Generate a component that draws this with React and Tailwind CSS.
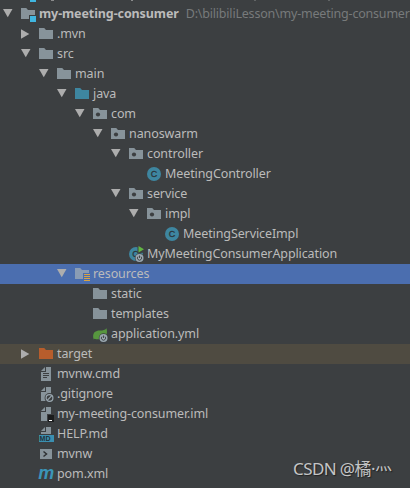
const ROWS = [
  { level: 0, arrow: 'down', icon: 'module', label: 'my-meeting-consumer', path: 'D:\\bilibiliLesson\\my-meeting-consumer' },
  { level: 1, arrow: 'right', icon: 'folder', label: '.mvn' },
  { level: 1, arrow: 'down', icon: 'folder', label: 'src' },
  { level: 2, arrow: 'down', icon: 'folder', label: 'main' },
  { level: 3, arrow: 'down', icon: 'source', label: 'java' },
  { level: 4, arrow: 'down', icon: 'package', label: 'com' },
  { level: 5, arrow: 'down', icon: 'package', label: 'nanoswarm' },
  { level: 6, arrow: 'down', icon: 'package', label: 'controller' },
  { level: 7, icon: 'class', label: 'MeetingController' },
  { level: 6, arrow: 'down', icon: 'package', label: 'service' },
  { level: 7, arrow: 'down', icon: 'package', label: 'impl' },
  { level: 8, icon: 'class', label: 'MeetingServiceImpl' },
  { level: 6, icon: 'application', label: 'MyMeetingConsumerApplication' },
  { level: 3, arrow: 'down', icon: 'resources', label: 'resources', rowClass: 'bg-[#4b6eaf]' },
  { level: 4, icon: 'folder', label: 'static' },
  { level: 4, icon: 'folder', label: 'templates' },
  { level: 4, icon: 'spring', label: 'application.yml' },
  { level: 1, arrow: 'right', icon: 'excluded', label: 'target', rowClass: 'bg-[#4f4b41]' },
  { level: 1, icon: 'text', label: 'mvnw.cmd' },
  { level: 1, icon: 'ignored', label: '.gitignore' },
  { level: 1, icon: 'iml', label: 'my-meeting-consumer.iml' },
  { level: 1, icon: 'markdown', label: 'HELP.md' },
  { level: 1, icon: 'shell', label: 'mvnw' },
  { level: 1, icon: 'maven', label: 'pom.xml' },
];

const FOLDER = 'M1 2h5.2L8 4h7v9H1z';

const BootBadge = () => (
  <g>
    <circle cx="11.5" cy="12" r="4.7" fill="#3c3f41" />
    <circle cx="11.5" cy="12" r="4" fill="#9aa7b0" />
    <path d="M10 10.6a2.1 2.1 0 1 0 3 0M11.5 9.5v2.5" fill="none" stroke="#3c3f41" strokeWidth="0.9" />
  </g>
);

const FileBody = ({ d = 'M8 1h5v14H3V6h5z' }) => (
  <g fill="#87939a">
    <path d="M7 1v4H3z" />
    <path d={d} />
  </g>
);

const ICONS = {
  folder: <path d={FOLDER} fill="#87939a" />,
  source: <path d={FOLDER} fill="#3e86a0" />,
  excluded: <path d={FOLDER} fill="#b75d2c" />,
  module: (
    <>
      <path d="M1 2h5.2L8 4h7v5H9v4H1z" fill="#87939a" />
      <path d="M10 10h6v6h-6z" fill="#40b6e0" />
    </>
  ),
  package: (
    <>
      <path d={FOLDER} fill="#87939a" />
      <circle cx="6" cy="8.5" r="2.1" fill="#3c3f41" />
    </>
  ),
  resources: (
    <>
      <path d="M1 2h5.2L8 4h7v3H9v6H1z" fill="#8a9cb4" />
      <path d="M10 8.5h6M10 10.5h6M10 12.5h6M10 14.5h6" stroke="#d9a343" strokeWidth="1" />
    </>
  ),
  class: (
    <>
      <circle cx="8" cy="8" r="7" fill="#3e86a0" />
      <text x="8" y="11.2" textAnchor="middle" fontSize="9" fill="#2b353a" stroke="#2b353a" strokeWidth="0.3">C</text>
    </>
  ),
  application: (
    <>
      <circle cx="8" cy="8" r="7" fill="#3e86a0" />
      <text x="7.5" y="11.2" textAnchor="middle" fontSize="9" fill="#2b353a" stroke="#2b353a" strokeWidth="0.3">C</text>
      <path d="M9.5 0H16v6.5l-6.500 1z" fill="#3c3f41" />
      <path d="M10.500 0 16 3.200l-5.500 3.200z" fill="#62b543" />
      <BootBadge />
    </>
  ),
  spring: (
    <>
      <path d="M1.200 11.500C0.600 6.500 4 4.500 8 4.600c3 0 5-.6 6.500-2.400C15.600 6 15 9 12.500 11c-3 2.500-7 2.800-10 1.800l-.8.8z" fill="#57963f" />
      <BootBadge />
    </>
  ),
  text: (
    <>
      <FileBody />
      <path d="M5 7.500h6M5 9.500h6M5 11.500h4" stroke="#3c3f41" strokeWidth="1" />
    </>
  ),
  ignored: (
    <>
      <FileBody />
      <circle cx="11.500" cy="12" r="4.900" fill="#3c3f41" />
      <circle cx="11.500" cy="12" r="3.400" fill="none" stroke="#9aa7b0" strokeWidth="1.200" />
      <path d="m9.200 14.300 4.600-4.600" stroke="#9aa7b0" strokeWidth="1.200" />
    </>
  ),
  iml: (
    <>
      <FileBody d="M8 1h5v7H9v7H3V6h5z" />
      <path d="M10 9h6v7h-6z" fill="#1b1c1d" />
      <path d="M11 14h3v1h-3z" fill="#fff" />
    </>
  ),
  markdown: (
    <>
      <FileBody d="M8 1h5v7H3V6h5z" />
      <path d="M1 9h15v7H1z" fill="#3b8fb0" />
      <text x="7" y="15" textAnchor="middle" fontSize="7" fontWeight="700" fill="#22323a">MD</text>
    </>
  ),
  shell: (
    <>
      <path d="M2 3h12v10H2z" fill="#87939a" />
      <path d="m5.500 5.500 3 2.500-3 2.500" fill="none" stroke="#2e3133" strokeWidth="1.500" />
    </>
  ),
  maven: (
    <text x="0.300" y="13" fontSize="18" fontWeight="700" fontStyle="italic" fill="#3b95b8" textLength="16" lengthAdjust="spacingAndGlyphs">m</text>
  ),
};

const Arrow = ({ direction }) => (
  <svg viewBox="0 0 16 16" className="h-4 w-4" fill="#adadad">
    {direction === 'down' && <path d="M3 3h9.500L7.750 11.300z" />}
    {direction === 'right' && <path d="M3 3.300 11.300 8 3 12.700z" />}
  </svg>
);

const TreeRow = ({ row }) => (
  <div className={`flex h-5 items-center ${row.rowClass ?? ''}`} style={{ paddingLeft: row.level * 18 }}>
    <div className="w-5 shrink-0">
      <Arrow direction={row.arrow} />
    </div>
    <svg viewBox="0 0 16 16" className="h-4 w-4 shrink-0 overflow-visible font-['Liberation_Sans',sans-serif] tracking-normal">
      {ICONS[row.icon]}
    </svg>
    <span className={`ml-[3px] ${row.path ? 'font-bold' : ''}`}>{row.label}</span>
    {row.path && <span className="ml-[7px] tracking-[-0.2px] text-[#777a7b]">{row.path}</span>}
  </div>
);

// bottom edge of the row scrolled out above the tree
const ScrolledRowEdge = () => (
  <div className="flex h-1 items-start pl-[30px]">
    <span className="h-0.5 w-1.5 bg-[#40b6e0]" />
    <span className="ml-[15px] h-px w-[3px] bg-[#8a8b8c]" />
    <span className="ml-[77px] h-px w-0.5 bg-[#8a8b8c]" />
    <span className="ml-[121px] h-px w-0.5 bg-[#616465]" />
    <span className="ml-[72px] h-px w-0.5 bg-[#616465]" />
  </div>
);

const App = () => {
  return (
    <div className="relative h-[488px] w-[410px] overflow-hidden whitespace-nowrap bg-[#3c3f41] font-['Noto_Sans','Noto_Sans_CJK_SC',sans-serif] text-[12.5px] leading-5 tracking-[-0.1px] text-[#bbbbbb]">
      <ScrolledRowEdge />
      {ROWS.map((row) => (
        <TreeRow key={row.label} row={row} />
      ))}
      <div className="absolute left-[293px] top-[457px] text-[17px] leading-6 tracking-[-0.6px] text-[#c4c5c6] [text-shadow:1px_1px_1px_#222]">
        CSDN @橘·<span className="relative -top-[5px]">灬</span>
      </div>
    </div>
  );
};

export default App;
